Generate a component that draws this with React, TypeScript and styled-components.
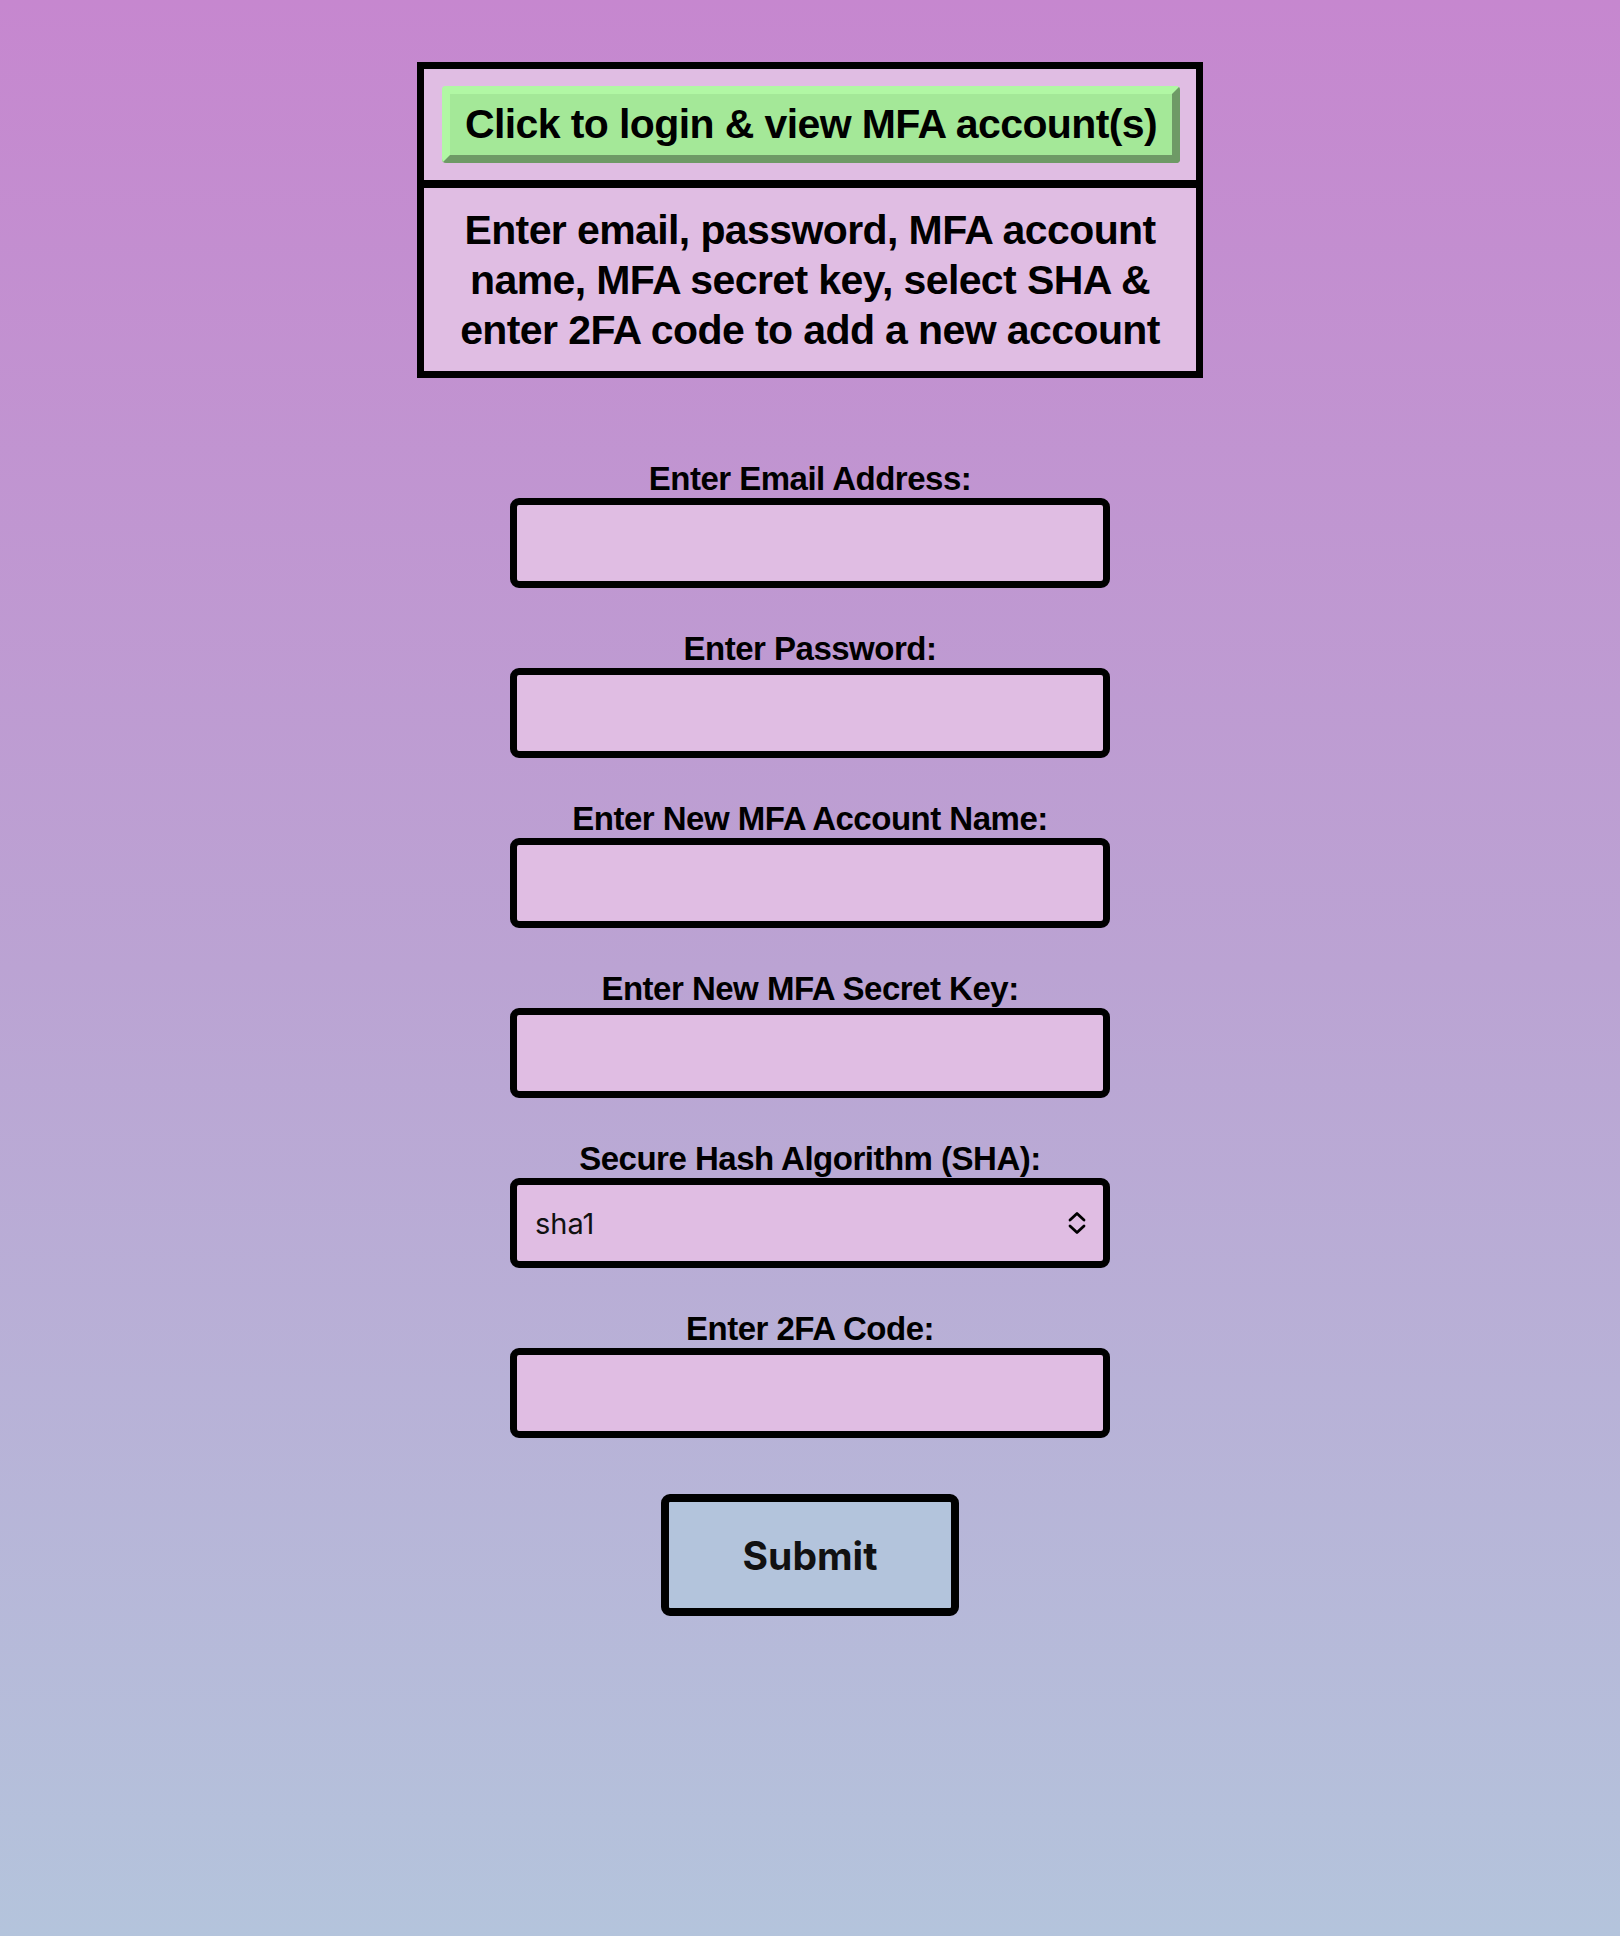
import styled, { createGlobalStyle } from "styled-components";

const GlobalStyle = createGlobalStyle`
  html, body {
    margin: 0;
    padding: 0;
  }
  body {
    min-height: 100vh;
    background: linear-gradient(180deg, #c687cf 0%, #bba3d3 50%, #b4c4dc 100%);
    font-family: "Liberation Sans", Arial, sans-serif;
  }
`;

const Page = styled.div`
  display: flex;
  flex-direction: column;
  align-items: center;
  padding: 62px 0 120px;
`;

const InfoCard = styled.div`
  width: 786px;
  box-sizing: border-box;
  border: 7px solid #000;
  background: #e0bde3;
`;

const CardTop = styled.div`
  padding: 17px 16px 17px 18px;
  border-bottom: 8px solid #000;
`;

const LoginButton = styled.button`
  display: block;
  width: 100%;
  height: 77px;
  box-sizing: border-box;
  border-style: solid;
  border-width: 8px;
  border-color: #b1f7a4 #6e9a66 #6e9a66 #b1f7a4;
  border-radius: 4px;
  background: #a4e898;
  color: #000;
  font-family: "Liberation Sans", Arial, sans-serif;
  font-weight: 700;
  font-size: 41px;
  letter-spacing: -0.6px;
  line-height: 1;
  padding: 0;
  cursor: pointer;
`;

const CardText = styled.p`
  margin: 0;
  padding: 17px 10px 16px;
  text-align: center;
  font-weight: 700;
  font-size: 41px;
  letter-spacing: -0.6px;
  line-height: 50px;
  color: #000;
`;

const Form = styled.form`
  display: flex;
  flex-direction: column;
  align-items: center;
  gap: 42px;
  margin-top: 82px;
`;

const Field = styled.div`
  display: flex;
  flex-direction: column;
  align-items: center;
`;

const Label = styled.label`
  font-weight: 700;
  font-size: 33px;
  letter-spacing: -0.5px;
  line-height: 38px;
  color: #000;
`;

const TextInput = styled.input`
  width: 600px;
  height: 90px;
  box-sizing: border-box;
  border: 7px solid #000;
  border-radius: 9px;
  background: #e0bde3;
  padding: 0 18px;
  font-family: Inter, "Noto Sans", sans-serif;
  font-size: 29px;
  outline: none;
`;

const SelectWrap = styled.div`
  position: relative;
  width: 600px;
`;

const Select = styled.select`
  width: 100%;
  height: 90px;
  box-sizing: border-box;
  border: 7px solid #000;
  border-radius: 9px;
  background: #e0bde3;
  padding: 0 18px;
  appearance: none;
  font-family: Inter, "Noto Sans", sans-serif;
  font-size: 29px;
  color: #111;
  outline: none;
`;

const Chevron = styled.svg`
  position: absolute;
  right: 22px;
  top: 50%;
  transform: translateY(-50%);
  pointer-events: none;
`;

const SubmitButton = styled.button`
  margin-top: 14px;
  width: 298px;
  height: 122px;
  box-sizing: border-box;
  border: 8px solid #000;
  border-radius: 9px;
  background: #b3c4dc;
  color: #111;
  font-family: Inter, "Noto Sans", sans-serif;
  font-weight: 700;
  font-size: 39px;
  cursor: pointer;
`;

const fields = [
  { id: "email", label: "Enter Email Address:", type: "email" },
  { id: "password", label: "Enter Password:", type: "password" },
  { id: "name", label: "Enter New MFA Account Name:", type: "text" },
  { id: "secret", label: "Enter New MFA Secret Key:", type: "text" },
];

function App() {
  return (
    <>
      <GlobalStyle />
      <Page>
        <InfoCard>
          <CardTop>
            <LoginButton type="button">Click to login &amp; view MFA account(s)</LoginButton>
          </CardTop>
          <CardText>
            Enter email, password, MFA account
            <br />
            name, MFA secret key, select SHA &amp;
            <br />
            enter 2FA code to add a new account
          </CardText>
        </InfoCard>

        <Form onSubmit={(e) => e.preventDefault()}>
          {fields.map((f) => (
            <Field key={f.id}>
              <Label htmlFor={f.id}>{f.label}</Label>
              <TextInput id={f.id} type={f.type} />
            </Field>
          ))}
          <Field>
            <Label htmlFor="sha">Secure Hash Algorithm (SHA):</Label>
            <SelectWrap>
              <Select id="sha" defaultValue="sha1">
                <option value="sha1">sha1</option>
                <option value="sha256">sha256</option>
                <option value="sha512">sha512</option>
              </Select>
              <Chevron width="22" height="26" viewBox="0 0 22 26" fill="none">
                <path
                  d="M4 10 L11 3.5 L18 10 M4 16 L11 22.5 L18 16"
                  stroke="#000"
                  strokeWidth="2.8"
                  strokeLinecap="round"
                  strokeLinejoin="round"
                />
              </Chevron>
            </SelectWrap>
          </Field>
          <Field>
            <Label htmlFor="code">Enter 2FA Code:</Label>
            <TextInput id="code" type="text" />
          </Field>
          <SubmitButton type="submit">Submit</SubmitButton>
        </Form>
      </Page>
    </>
  );
}

export default App;
